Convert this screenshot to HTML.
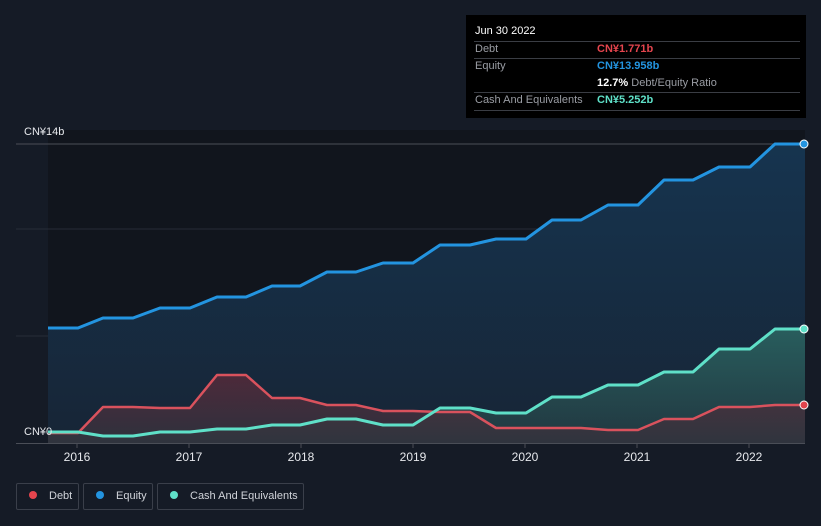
<!DOCTYPE html>
<html><head><meta charset="utf-8"><style>
body{margin:0;width:821px;height:526px;background:#151b26;font-family:"Liberation Sans",sans-serif;overflow:hidden;position:relative}
.tt{position:absolute;left:466px;top:15px;width:340px;height:103px;background:#000;color:#fff;font-size:11px}
.tt .r{position:absolute;left:8px;width:326px;border-top:1px solid #3a3d44}
.lg{position:absolute;top:483px;height:27px;border:1px solid #3a3f4a;border-radius:2px;color:#d0d3d9;font-size:11px;line-height:25px;box-sizing:border-box;white-space:nowrap}
.dot{display:inline-block;width:8px;height:8px;border-radius:50%;margin:0 12px 0 12px;vertical-align:0px}
</style></head><body>
<svg width="821" height="526" style="position:absolute;left:0;top:0">
<defs>
<linearGradient id="ge" x1="0" y1="0" x2="0" y2="1"><stop offset="0" stop-color="#16344f"/><stop offset="1" stop-color="#172536"/></linearGradient>
<linearGradient id="gc" x1="0" y1="0" x2="0" y2="1"><stop offset="0" stop-color="#2b6662"/><stop offset="1" stop-color="#233a42"/></linearGradient>
<linearGradient id="gd" x1="0" y1="0" x2="0" y2="1"><stop offset="0" stop-color="#5a2a3a"/><stop offset="1" stop-color="#33343e"/></linearGradient>
</defs>
<rect x="48" y="130" width="757" height="313" fill="#11151d"/>
<line x1="16" y1="144" x2="805" y2="144" stroke="#4a4e57"/>
<line x1="16" y1="229" x2="805" y2="229" stroke="#262c38"/>
<line x1="16" y1="336" x2="805" y2="336" stroke="#262c38"/>
<polygon fill="url(#ge)" points="48,328 78,328 103,318 133,318 160,308 190,308 217,297 246,297 272,286 300,286 327,272 356,272 383,263 413,263 440,245 470,245 496,239 526,239 552,220 581,220 608,205 638,205 664,180 693,180 719,167 750,167 775,144 805,144 805,443 48,443"/>
<polygon fill="url(#gc)" opacity="0.85" points="48,432 78,432 103,436 133,436 160,432 190,432 217,429 246,429 272,425 300,425 327,419 356,419 383,425 413,425 440,408 470,408 496,413 526,413 552,397 581,397 608,385 638,385 664,372 693,372 719,349 750,349 775,329 805,329 805,443 48,443"/>
<polygon fill="url(#gd)" opacity="0.8" points="48,433 78,433 103,407 133,407 160,408 190,408 217,375 246,375 272,398 300,398 327,405 356,405 383,411 413,411 440,412 470,412 496,428 526,428 581,428 608,430 638,430 664,419 693,419 719,407 750,407 775,405 805,405 805,443 48,443"/>
<g fill="none" stroke-width="3" stroke-linejoin="round">
<polyline stroke="#2394e0" points="48,328 78,328 103,318 133,318 160,308 190,308 217,297 246,297 272,286 300,286 327,272 356,272 383,263 413,263 440,245 470,245 496,239 526,239 552,220 581,220 608,205 638,205 664,180 693,180 719,167 750,167 775,144 805,144"/>
<polyline stroke="#d9525d" stroke-width="2.5" points="48,433 78,433 103,407 133,407 160,408 190,408 217,375 246,375 272,398 300,398 327,405 356,405 383,411 413,411 440,412 470,412 496,428 526,428 581,428 608,430 638,430 664,419 693,419 719,407 750,407 775,405 805,405"/>
<polyline stroke="#5fe0c8" points="48,432 78,432 103,436 133,436 160,432 190,432 217,429 246,429 272,425 300,425 327,419 356,419 383,425 413,425 440,408 470,408 496,413 526,413 552,397 581,397 608,385 638,385 664,372 693,372 719,349 750,349 775,329 805,329"/>
</g>
<circle cx="804" cy="144" r="4" fill="#2394e0" stroke="#fff" stroke-width="1"/>
<circle cx="804" cy="329" r="4" fill="#5fe0c8" stroke="#fff" stroke-width="1"/>
<circle cx="804" cy="405" r="4" fill="#e0434c" stroke="#fff" stroke-width="1"/>
<line x1="16" y1="443.5" x2="805" y2="443.5" stroke="#4a4e57"/>
<g stroke="#4a4e57"><line x1="77" y1="443" x2="77" y2="448"/><line x1="189" y1="443" x2="189" y2="448"/><line x1="301" y1="443" x2="301" y2="448"/><line x1="413" y1="443" x2="413" y2="448"/><line x1="525" y1="443" x2="525" y2="448"/><line x1="637" y1="443" x2="637" y2="448"/><line x1="749" y1="443" x2="749" y2="448"/></g>
<g fill="#e6e8ec" font-size="12" text-anchor="middle" font-family="Liberation Sans,sans-serif">
<text x="77" y="461">2016</text><text x="189" y="461">2017</text><text x="301" y="461">2018</text><text x="413" y="461">2019</text><text x="525" y="461">2020</text><text x="637" y="461">2021</text><text x="749" y="461">2022</text>
</g>
<text x="24" y="135" fill="#e6e8ec" font-size="11" font-family="Liberation Sans,Noto Sans CJK SC,sans-serif">CN¥14b</text>
<text x="24" y="435" fill="#e6e8ec" font-size="11" font-family="Liberation Sans,Noto Sans CJK SC,sans-serif">CN¥0</text>
</svg>
<div class="tt">
<div style="position:absolute;left:9px;top:10px;font-size:11px">Jun 30 2022</div>
<div class="r" style="top:26px"></div>
<div style="position:absolute;left:9px;top:28px;color:#9a9da4">Debt</div><div style="position:absolute;left:131px;top:28px;color:#e5454e;font-weight:bold">CN¥1.771b</div>
<div class="r" style="top:43px"></div>
<div style="position:absolute;left:9px;top:45px;color:#9a9da4">Equity</div><div style="position:absolute;left:131px;top:45px;color:#2394e0;font-weight:bold">CN¥13.958b</div>
<div style="position:absolute;left:131px;top:62px"><b>12.7%</b> <span style="color:#9a9da4">Debt/Equity Ratio</span></div>
<div class="r" style="top:77px"></div>
<div style="position:absolute;left:9px;top:79px;color:#9a9da4">Cash And Equivalents</div><div style="position:absolute;left:131px;top:79px;color:#5fe0c8;font-weight:bold">CN¥5.252b</div>
<div class="r" style="top:95px"></div>
</div>
<div class="lg" style="left:16px;width:63px"><span class="dot" style="background:#e5454e"></span>Debt</div>
<div class="lg" style="left:83px;width:70px"><span class="dot" style="background:#2394e0"></span>Equity</div>
<div class="lg" style="left:157px;width:147px"><span class="dot" style="background:#5fe0c8"></span>Cash And Equivalents</div>
</body></html>
